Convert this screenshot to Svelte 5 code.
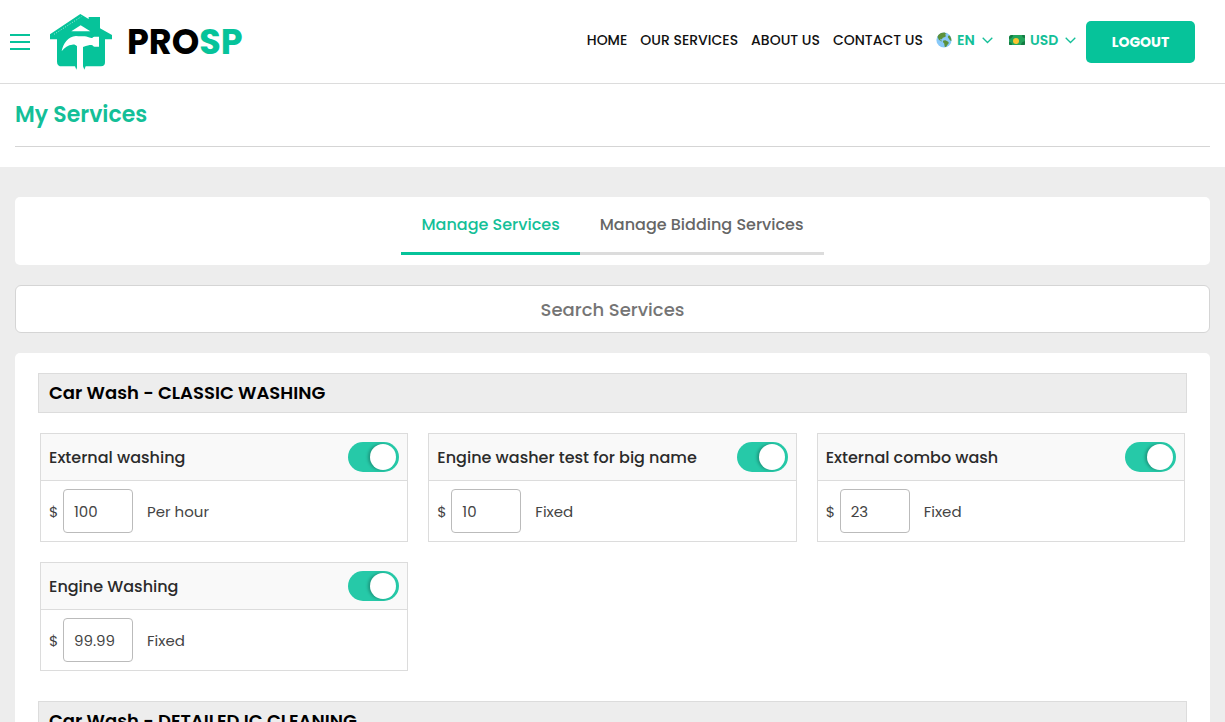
<script lang="ts">
  const links = ['HOME', 'OUR SERVICES', 'ABOUT US', 'CONTACT US'];
  const tabs = ['Manage Services', 'Manage Bidding Services'];

  let activeTab = $state(0);
  let language = $state('EN');
  let currency = $state('USD');
  let search = $state('');

  let categories = $state([
    {
      name: 'Car Wash - CLASSIC WASHING',
      services: [
        { name: 'External washing', price: '100', type: 'Per hour', on: true },
        { name: 'Engine washer test for big name', price: '10', type: 'Fixed', on: true },
        { name: 'External combo wash', price: '23', type: 'Fixed', on: true },
        { name: 'Engine Washing', price: '99.99', type: 'Fixed', on: true }
      ]
    },
    { name: 'Car Wash - DETAILED IC CLEANING', services: [] }
  ]);
</script>

{#snippet chevron()}
  <svg class="chevron" width="11" height="7" viewBox="0 0 11 7" aria-hidden="true">
    <path d="M.7.7 5.500 5.500 10.300.7" fill="none" stroke="currentColor" stroke-width="1.3" />
  </svg>
{/snippet}

<header>
  <button class="burger" type="button" aria-label="Menu">
    <span></span><span></span><span></span>
  </button>
  <a class="logo" href="#home">
    <svg width="62" height="57" viewBox="150 38 186 171" aria-hidden="true">
      <path
        fill="#06c39a"
        d="M241 41 266 56V50h34v34l36 20v13h-21v69q0 12-12 12h-46l-4 10-4-10h-17l-3 10-4-10h-39q-15 0-15-14v-67h-21v-15z"
      />
      <path fill="#fff" d="m242 75 29 18h-57z" />
      <path fill="none" stroke="#fff" stroke-width="2" stroke-dasharray="3 5" d="M162 102 244 49" />
      <path
        fill="#fff"
        d="M185 153c4-24 19-44 43-46 10 1 19 1 26 1 8 0 11 4 20 5 4 0 5-4 9-4h14v30h-13c-5 0-5-5-10-5-7 0-12 2-25 6v60h-18v-62c-4-5-9-6-14-5-12 1-24 8-32 20z"
      />
    </svg>
    <span class="brand">PRO<b>SP</b></span>
  </a>
  <nav>
    {#each links as link}
      <a href="#{link.toLowerCase().replace(' ', '-')}">{link}</a>
    {/each}
    <label class="picker">
      <svg width="16" height="16" viewBox="0 0 16 16" role="img" aria-label="Language">
        <circle cx="8" cy="8" r="7.6" fill="#88c9f9" />
        <path fill="#5c913b" d="M2.2 3.2C4 1 6.500.4 8.600.5l1.900 1.400-1.700.8 1.400 1.200-1.800 1.300-1.600.6-1 1.800-1.200-.8-.3 1.400 1.700.5-.6.7-2.500-1.700L1.500 5z" />
        <path fill="#5c913b" d="m7.300 8.600 2.100-.3 2.800 1.500.7 1.300-1.400 1.700-1.500 2.300-1.300-.4-.5-3.200-1.300-1.600zM12.600 3.500l1.300.3 1.200 2.500.3 2.600-1.500-.7-1.200-1.800-1-1.300z" />
      </svg>
      <select class="en" bind:value={language}>
        <option>EN</option>
      </select>
      {@render chevron()}
    </label>
    <label class="picker">
      <svg width="16" height="10" viewBox="0 0 16 10" role="img" aria-label="Currency">
        <path fill="#24a45c" d="M3 0h12q1 0 1 1v8q0 1-1 1H1q-1 0-1-1V3q0-3 3-3z" />
        <path fill="#137b43" d="M0 3q0-3 3-3h1Q4 3 0 4zm16 6q0 1-1 1h-3q0-3 4-4zM0 7q3 0 3 3H1q-1 0-1-1zM16 3q-3 0-3-3h2q1 0 1 1z" />
        <circle cx="7" cy="6" r="3" fill="#fbc531" />
      </svg>
      <select class="usd" bind:value={currency}>
        <option>USD</option>
      </select>
      {@render chevron()}
    </label>
    <button class="logout" type="button">LOGOUT</button>
  </nav>
</header>

<div class="title">
  <h1>My Services</h1>
</div>

<main>
  <div class="card tabs" role="tablist">
    {#each tabs as tab, i}
      <button
        type="button"
        role="tab"
        aria-selected={activeTab === i}
        class:active={activeTab === i}
        onclick={() => (activeTab = i)}>{tab}</button
      >
    {/each}
  </div>

  <input class="search" type="text" placeholder="Search Services" aria-label="Search Services" bind:value={search} />

  <div class="card panel">
    {#each categories as category}
      <section>
        <h2>{category.name}</h2>
        <div class="grid">
          {#each category.services as service}
            <div class="service">
              <label class="head">
                <span>{service.name}</span>
                <input class="toggle" type="checkbox" role="switch" bind:checked={service.on} />
              </label>
              <label class="body">
                <span class="sign">$</span>
                <input class="price" type="text" bind:value={service.price} />
                <span>{service.type}</span>
              </label>
            </div>
          {/each}
        </div>
      </section>
    {/each}
  </div>
</main>

<style>
  :global(body) {
    background: #ededed;
    font-family: Poppins, Inter, 'Open Sans', sans-serif;
    color: #2b2b2b;
  }
  :global(*) {
    box-sizing: border-box;
  }
  button,
  input,
  select {
    font: inherit;
    color: inherit;
    margin: 0;
  }
  button {
    border: 0;
    padding: 0;
    background: none;
    cursor: pointer;
  }
  a {
    color: inherit;
    text-decoration: none;
  }
  h1,
  h2 {
    margin: 0;
    font-weight: 600;
  }
  svg {
    flex: none;
  }

  header {
    display: flex;
    align-items: center;
    height: 84px;
    padding: 0 30px 0 10px;
    background: #fff;
    border-bottom: 1px solid #dcdcdc;
  }
  .burger {
    display: grid;
    gap: 5px;
    width: 20px;
  }
  .burger span {
    height: 2px;
    background: #06c39a;
  }
  .logo {
    display: flex;
    align-items: center;
    gap: 15px;
    margin-left: 20px;
  }
  .brand {
    font-size: 35px;
    font-weight: 700;
    color: #000;
  }
  .brand b {
    font-weight: 700;
    color: #06c39a;
  }
  nav {
    display: flex;
    align-items: center;
    gap: 13px;
    margin-left: auto;
    font-size: 14px;
    font-weight: 500;
    line-height: 20px;
    color: #111;
    white-space: nowrap;
  }
  nav > a,
  .picker {
    padding-bottom: 4px;
  }
  .picker {
    position: relative;
    display: flex;
    align-items: center;
    gap: 5px;
    color: #14bf98;
    font-weight: 600;
  }
  .picker + .picker {
    margin-left: 3px;
  }
  select {
    appearance: none;
    border: 0;
    padding: 0;
    background: none;
    cursor: pointer;
  }
  .en {
    width: 36px;
  }
  .usd {
    width: 46px;
  }
  .chevron {
    position: absolute;
    right: 0;
    top: 7px;
    pointer-events: none;
  }
  .logout {
    width: 109px;
    height: 42px;
    margin-left: -3px;
    border-radius: 5px;
    background: #06c39a;
    color: #fff;
    font-weight: 700;
  }

  .title {
    padding: 0 15px 20px;
    background: #fff;
  }
  h1 {
    height: 63px;
    border-bottom: 1px solid #d5d5d5;
    font-size: 22px;
    line-height: 62px;
    color: #14bf98;
  }

  main {
    display: grid;
    gap: 20px;
    padding: 30px 15px;
  }
  .card {
    background: #fff;
    border-radius: 5px;
  }
  .tabs {
    display: flex;
    justify-content: center;
    padding-bottom: 10px;
  }
  .tabs button {
    height: 58px;
    padding: 0 20px;
    border-bottom: 3px solid #dcdcdc;
    font-size: 16px;
    font-weight: 500;
    color: #666;
  }
  .tabs .active {
    border-color: #06c39a;
    color: #14bf98;
  }
  .search {
    width: 100%;
    height: 48px;
    border: 1px solid #d5d5d5;
    border-radius: 6px;
    background: #fff;
    font-size: 18px;
    font-weight: 500;
    text-align: center;
  }
  .search::placeholder {
    color: #757575;
    opacity: 1;
  }

  .panel {
    display: grid;
    gap: 30px;
    padding: 20px 23px;
  }
  h2 {
    height: 40px;
    padding: 0 10px;
    border: 1px solid #dcdcdc;
    background: #ededed;
    font-size: 18px;
    line-height: 38px;
    color: #000;
  }
  .grid {
    display: grid;
    grid-template-columns: repeat(3, 1fr);
    gap: 20px;
    margin: 20px 2px 0;
  }
  .service {
    border: 1px solid #dcdcdc;
  }
  .head {
    display: flex;
    align-items: center;
    justify-content: space-between;
    padding: 8px;
    border-bottom: 1px solid #dcdcdc;
    background: #f9f9f9;
    font-size: 16px;
    font-weight: 500;
  }
  .toggle {
    appearance: none;
    flex: none;
    width: 51px;
    height: 30px;
    padding: 2px 3px;
    border-radius: 15px;
    background: #ccc;
    overflow: hidden;
    cursor: pointer;
  }
  .toggle::before {
    content: '';
    display: block;
    width: 26px;
    height: 26px;
    border-radius: 50%;
    background: #fff;
    box-shadow: -2px 0 3px rgba(0, 0, 0, 0.25);
    transition: margin 0.2s;
  }
  .toggle:checked {
    background: #26c9a8;
  }
  .toggle:checked::before {
    margin-left: 19px;
  }
  .body {
    display: flex;
    align-items: center;
    padding: 8px;
    font-size: 15px;
    font-weight: 400;
    color: #444;
  }
  .sign {
    width: 14px;
  }
  .price {
    width: 70px;
    height: 44px;
    margin-right: 14px;
    padding: 0 10px;
    border: 1px solid #bbb;
    border-radius: 4px;
    background: #fff;
  }
</style>
